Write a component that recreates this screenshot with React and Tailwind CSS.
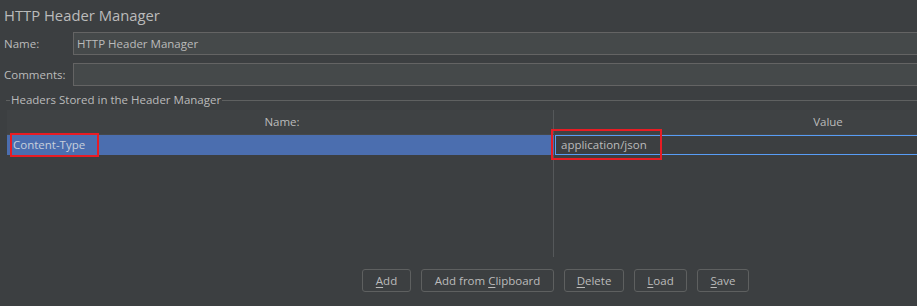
import React from "react";

const font = { fontFamily: '"Open Sans", "Noto Sans", sans-serif' };

function Btn({ w, pre = "", u, post }) {
  return (
    <button className={`${w} h-[23px] border border-[#5e6060] rounded-[3px] bg-[#3c3f41] text-[#bbbbbb] text-[11.5px] leading-none flex items-center justify-center whitespace-pre`}>
      <span>{pre}</span>
      <span className="underline underline-offset-2">{u}</span>
      <span>{post}</span>
    </button>
  );
}

export default function App() {
  return (
    <div
      className="w-[917px] h-[306px] bg-[#3c3f41] text-[#bbbbbb] overflow-hidden flex flex-col"
      style={font}
    >
      <div className="h-[30px] pl-[4px] pt-[4px] text-[14.8px] leading-[22px]">HTTP Header Manager</div>
      <div className="flex items-center h-[23px] mt-[2px]">
        <div className="w-[73px] pl-[4px] text-[11.5px]">Name:</div>
        <div className="flex-1 h-[23px] -mr-[4px] border border-[#646464] bg-[#45494a] pl-[3px] text-[11.5px] flex items-center">
          HTTP Header Manager
        </div>
      </div>
      <div className="flex items-center h-[23px] mt-[8px]">
        <div className="w-[73px] pl-[4px] text-[11.5px]">Comments:</div>
        <div className="flex-1 h-[23px] -mr-[4px] border border-[#646464] bg-[#45494a]" />
      </div>
      <div className="flex items-center h-[14px] mt-[7px] pl-[6px]">
        <div className="w-[4px] h-px bg-[#5e6060]" />
        <div className="px-[1px] text-[11.5px] leading-none">Headers Stored in the Header Manager</div>
        <div className="flex-1 h-px bg-[#5e6060]" />
      </div>
      <div className="ml-[7px] w-[1095px] flex flex-col mt-[3px]">
        <div className="h-[25px] flex bg-[#3f4244] border-b border-[#45484a] text-[11.5px]">
          <div className="w-[547px] flex items-center justify-center border-r border-[#55585a] pl-[4px]">Name:</div>
          <div className="flex-1 flex items-center justify-center">Value</div>
        </div>
        <div className="h-[20px] flex text-[11.5px]">
          <div className="w-[547px] bg-[#4b6eaf] flex items-center pl-[6px] text-[#c8d0dc]">
            <span className="relative">
              Content-Type
              <span className="absolute -left-[3px] -right-[14px] -top-[3px] -bottom-[3px] border-2 border-[#e81c24]" />
            </span>
          </div>
          <div className="flex-1 border border-[#589df6] bg-[#3c3f41] flex items-center pl-[5px] ml-px">
            <span className="relative">
              application/json
              <span className="absolute -left-[10px] -right-[15px] -top-[7px] -bottom-[6px] border-2 border-[#e81c24]" />
            </span>
          </div>
        </div>
        <div className="h-[102px] flex">
          <div className="w-[547px] border-r border-[#55585a]" />
          <div className="flex-1" />
        </div>
      </div>
      <div className="flex gap-[10px] pl-[362px] mt-[12px]">
        <Btn w="w-[49px]" u="A" post="dd" />
        <Btn w="w-[133px]" pre="Add from " u="C" post="lipboard" />
        <Btn w="w-[60px]" u="D" post="elete" />
        <Btn w="w-[53px]" u="L" post="oad" />
        <Btn w="w-[52px]" u="S" post="ave" />
      </div>
    </div>
  );
}
